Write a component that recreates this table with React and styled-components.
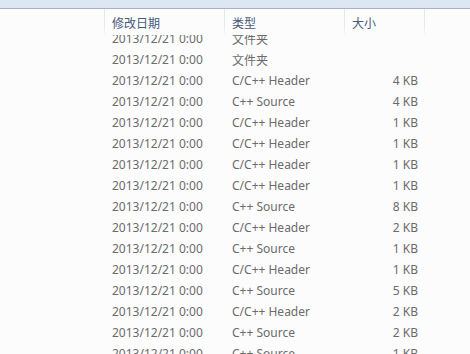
import styled, { createGlobalStyle } from 'styled-components'

const Global = createGlobalStyle`
	html, body {
		margin: 0;
		padding: 0;
		background: #fcfcfc;
		overflow: hidden;
	}
	body {
		font-family: "Noto Sans", "Noto Sans CJK SC", sans-serif;
		font-size: 12px;
	}
`

const Window = styled.div`
	width: 470px;
	height: 354px;
	display: flex;
	flex-direction: column;
	overflow: hidden;
	background: #fcfcfc;
`

const TopBand = styled.div`
	height: 8px;
	flex: none;
	background: #dde7f4;
	border-bottom: 1px solid #a6b1c2;
`

const Grid = styled.div`
	display: grid;
	grid-template-columns: 105px 120px 120px 80px 1fr;
`

const Header = styled(Grid)`
	height: 26px;
	flex: none;
	position: relative;
	z-index: 1;
	background: #fcfcfc;
`

const HeadCell = styled.div`
	display: flex;
	align-items: center;
	padding-left: 7px;
	padding-top: 1px;
	color: #465a7a;
	border-left: ${p => (p.$sep ? '1px solid transparent' : 'none')};
	border-image: ${p =>
		p.$sep ? 'linear-gradient(to bottom, #dfe6ef, #e6ebf2 70%, rgba(240,243,247,0)) 1' : 'none'};
	margin-left: ${p => (p.$sep ? '-1px' : '0')};
`

const List = styled.div`
	flex: 1;
	overflow: hidden;
`

const Rows = styled.div`
	margin-top: -7px;
`

const Row = styled(Grid)`
	height: 21px;
	align-items: center;
	color: #6b6b6b;
	white-space: nowrap;
`

const Cell = styled.div`
	padding: 0 7px;
	text-align: ${p => (p.$right ? 'right' : 'left')};
`

const files = [
	['文件夹', ''],
	['文件夹', ''],
	['C/C++ Header', '4 KB'],
	['C++ Source', '4 KB'],
	['C/C++ Header', '1 KB'],
	['C/C++ Header', '1 KB'],
	['C/C++ Header', '1 KB'],
	['C/C++ Header', '1 KB'],
	['C++ Source', '8 KB'],
	['C/C++ Header', '2 KB'],
	['C++ Source', '1 KB'],
	['C/C++ Header', '1 KB'],
	['C++ Source', '5 KB'],
	['C/C++ Header', '2 KB'],
	['C++ Source', '2 KB'],
	['C++ Source', '1 KB'],
]

export default function App() {
	return (
		<Window>
			<Global />
			<TopBand />
			<Header>
				<div />
				<HeadCell $sep>修改日期</HeadCell>
				<HeadCell $sep>类型</HeadCell>
				<HeadCell $sep>大小</HeadCell>
				<HeadCell $sep />
			</Header>
			<List>
				<Rows>
					{files.map(([type, size], i) => (
						<Row key={i}>
							<div />
							<Cell>2013/12/21 0:00</Cell>
							<Cell>{type}</Cell>
							<Cell $right>{size}</Cell>
							<div />
						</Row>
					))}
				</Rows>
			</List>
		</Window>
	)
}
